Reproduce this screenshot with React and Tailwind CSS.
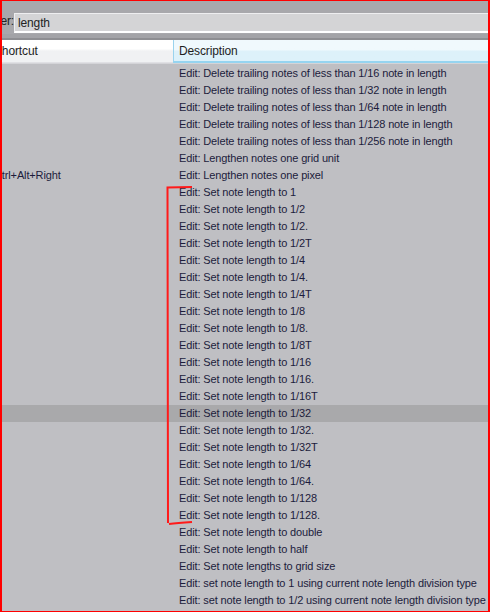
const rows = [
  { d: 'Edit: Delete trailing notes of less than 1/16 note in length' },
  { d: 'Edit: Delete trailing notes of less than 1/32 note in length' },
  { d: 'Edit: Delete trailing notes of less than 1/64 note in length' },
  { d: 'Edit: Delete trailing notes of less than 1/128 note in length' },
  { d: 'Edit: Delete trailing notes of less than 1/256 note in length' },
  { d: 'Edit: Lengthen notes one grid unit' },
  { d: 'Edit: Lengthen notes one pixel', s: 'Ctrl+Alt+Right' },
  { d: 'Edit: Set note length to 1' },
  { d: 'Edit: Set note length to 1/2' },
  { d: 'Edit: Set note length to 1/2.' },
  { d: 'Edit: Set note length to 1/2T' },
  { d: 'Edit: Set note length to 1/4' },
  { d: 'Edit: Set note length to 1/4.' },
  { d: 'Edit: Set note length to 1/4T' },
  { d: 'Edit: Set note length to 1/8' },
  { d: 'Edit: Set note length to 1/8.' },
  { d: 'Edit: Set note length to 1/8T' },
  { d: 'Edit: Set note length to 1/16' },
  { d: 'Edit: Set note length to 1/16.' },
  { d: 'Edit: Set note length to 1/16T' },
  { d: 'Edit: Set note length to 1/32', selected: true },
  { d: 'Edit: Set note length to 1/32.' },
  { d: 'Edit: Set note length to 1/32T' },
  { d: 'Edit: Set note length to 1/64' },
  { d: 'Edit: Set note length to 1/64.' },
  { d: 'Edit: Set note length to 1/128' },
  { d: 'Edit: Set note length to 1/128.' },
  { d: 'Edit: Set note length to double' },
  { d: 'Edit: Set note length to half' },
  { d: 'Edit: Set note lengths to grid size' },
  { d: 'Edit: set note length to 1 using current note length division type' },
  { d: 'Edit: set note length to 1/2 using current note length division type' },
];

export default function App() {
  return (
    <div
      className="relative w-[490px] h-[612px] overflow-hidden bg-[#bfbfc3] border-t border-b border-l-2 border-r-2 border-[#ff0000] text-[11px] tracking-[-0.13px] text-[#1c1c3c]"
      style={{ fontFamily: '"Liberation Sans", Arial, sans-serif' }}
    >
      {/* filter bar */}
      <div className="h-[33px] bg-[#a8a8ac] flex items-end pb-[1px]">
        <div className="w-[12px] shrink-0 overflow-hidden whitespace-nowrap flex justify-end text-[12px] pb-[3px] text-[#222]">
          <span className="shrink-0">Filter:</span>
        </div>
        <div className="flex-1 h-[20px] bg-[#d4d4d6] border-t border-l border-[#eeeef0] border-b-2 border-b-white flex items-center pl-[3px] text-[12px] text-[#222]">
          length
        </div>
      </div>
      <div className="h-[6px] bg-[#a3a3a7] border-b-2 border-[#8e8e92]" />

      {/* header */}
      <div className="flex h-[24px] border-b border-[#d4d4d8] text-[12px] text-[#1e1e1e]">
        <div className="w-[171px] shrink-0 overflow-hidden whitespace-nowrap flex items-center bg-gradient-to-b from-white from-40% to-[#f0f1f3] to-50% border-b border-[#e0e0e4]">
          <span className="-ml-[8px]">Shortcut</span>
        </div>
        <div className="flex-1 flex items-center pl-[5px] bg-gradient-to-b from-[#f0f9fd] from-45% to-[#ddf1fa] to-55% border-l border-[#9ad3ee] border-b-2 border-b-[#96d4f0]">
          Description
        </div>
      </div>

      {/* rows */}
      <div className="pt-[1px]">
        {rows.map((r, i) => (
          <div
            key={i}
            className={`flex h-[17px] items-center whitespace-nowrap ${r.selected ? 'bg-[#a9a9ab]' : ''}`}
          >
            <div className="w-[172px] shrink-0 overflow-hidden flex">
              {r.s && <span className="-ml-[8px]">{r.s}</span>}
            </div>
            <div className="pl-[5px]">{r.d}</div>
          </div>
        ))}
      </div>

      {/* red bracket annotation */}
      <svg className="absolute left-0 top-0" width="490" height="612" fill="none">
        <path d="M190 186 L165.5 186.5 L166 522" stroke="#ff1a1a" strokeWidth="2" />
        <path d="M167 523 Q175 522 190 521" stroke="#ff1a1a" strokeWidth="2" />
      </svg>
    </div>
  );
}
